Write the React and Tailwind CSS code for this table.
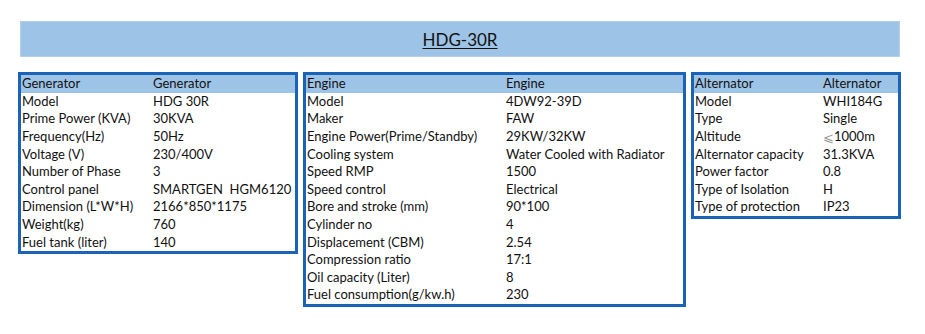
const generator = [
  ['Model', 'HDG 30R'],
  ['Prime Power (KVA)', '30KVA'],
  ['Frequency(Hz)', '50Hz'],
  ['Voltage (V)', '230/400V'],
  ['Number of Phase', '3'],
  ['Control panel', 'SMARTGEN  HGM6120'],
  ['Dimension (L*W*H)', '2166*850*1175'],
  ['Weight(kg)', '760'],
  ['Fuel tank (liter)', '140'],
];

const engine = [
  ['Model', '4DW92-39D'],
  ['Maker', 'FAW'],
  ['Engine Power(Prime/Standby)', '29KW/32KW'],
  ['Cooling system', 'Water Cooled with Radiator'],
  ['Speed RMP', '1500'],
  ['Speed control', 'Electrical'],
  ['Bore and stroke (mm)', '90*100'],
  ['Cylinder no', '4'],
  ['Displacement (CBM)', '2.54'],
  ['Compression ratio', '17:1'],
  ['Oil capacity (Liter)', '8'],
  ['Fuel consumption(g/kw.h)', '230'],
];

const alternator = [
  ['Model', 'WHI184G'],
  ['Type', 'Single'],
  ['Altitude', <><span className="text-[#9a9a9a] font-['Noto_Sans_CJK_SC',sans-serif]">⩽</span>1000m</>],
  ['Alternator capacity', '31.3KVA'],
  ['Power factor', '0.8'],
  ['Type of Isolation', 'H'],
  ['Type of protection', 'IP23'],
];

function SpecTable({ title, rows, width, labelWidth }) {
  return (
    <div className={`${width} border-[3px] border-[#1b63b6] bg-white`}>
      <div className="flex h-[17.6px] items-center bg-[#9dc3e6]">
        <div className={`${labelWidth} shrink-0 pl-px`}>{title}</div>
        <div className="pl-px">{title}</div>
      </div>
      {rows.map(([label, value], i) => (
        <div key={i} className="flex h-[17.6px] items-center">
          <div className={`${labelWidth} shrink-0 whitespace-pre pl-px`}>{label}</div>
          <div className="flex items-center whitespace-pre pl-px">{value}</div>
        </div>
      ))}
    </div>
  );
}

export default function App() {
  return (
    <div className="h-[334px] w-[925px] bg-white pt-[21px] text-[13px] leading-none text-[#111] font-['Lato','Noto_Sans_CJK_SC',sans-serif]">
      <div className="ml-[20px] flex h-[36px] w-[880px] items-center justify-center border border-[#b3cfec] bg-[#9dc3e6]">
        <span className="text-[17px] underline underline-offset-2 decoration-1">HDG-30R</span>
      </div>
      <div className="ml-[18px] mt-[15px] flex items-start gap-[5px]">
        <SpecTable title="Generator" rows={generator} width="w-[280px]" labelWidth="w-[131px]" />
        <SpecTable title="Engine" rows={engine} width="w-[383px]" labelWidth="w-[199px]" />
        <SpecTable title="Alternator" rows={alternator} width="w-[210px]" labelWidth="w-[128px]" />
      </div>
    </div>
  );
}
